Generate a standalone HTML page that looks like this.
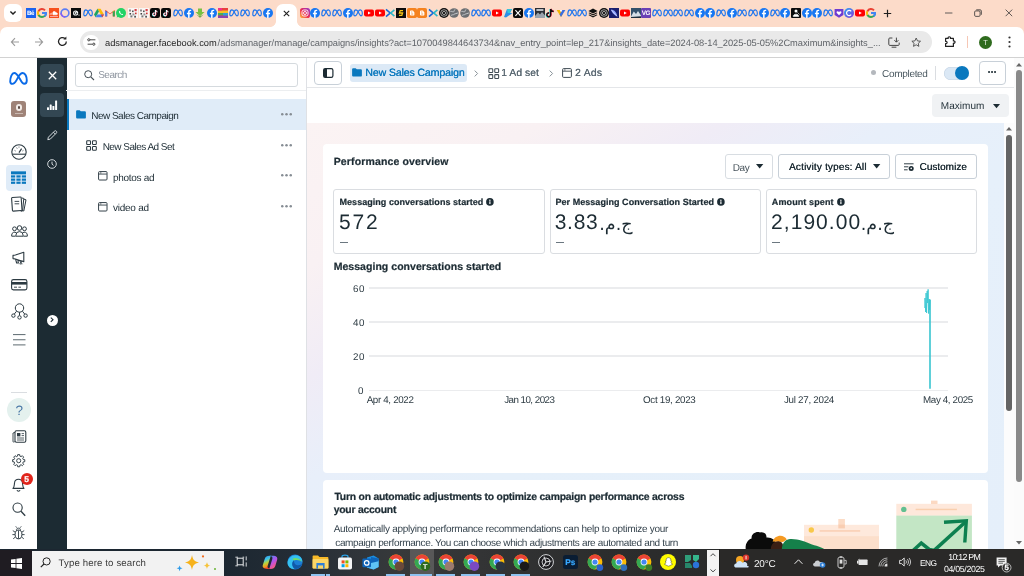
<!DOCTYPE html>
<html lang="en">
<head>
<meta charset="utf-8">
<title>Ads Manager</title>
<style>
*{box-sizing:border-box;margin:0;padding:0}
html,body{width:1024px;height:576px;overflow:hidden;background:#fff}
body{position:relative;font-family:"Liberation Sans","DejaVu Sans",sans-serif;color:#1c2b33;font-size:10px;will-change:transform;text-rendering:geometricPrecision}
.abs{position:absolute}
.t{position:absolute;white-space:nowrap;line-height:1}
svg{position:absolute;overflow:visible}
#tabstrip{left:0;top:0;width:1024px;height:36px;background:#fcdbc9}
#toolbar{left:0;top:27px;width:1024px;height:30px;background:#fff;border-radius:7px 7px 0 0}
#tabdd{left:4px;top:4px;width:18px;height:18px;border-radius:6px;background:#fff}
#acttab{left:276.3px;top:3.8px;width:20.6px;height:24.2px;background:#fff;border-radius:7px 7px 0 0}
#flareL{left:270.3px;top:21px;width:6px;height:6px;background:radial-gradient(circle at 0% 0%,#fcdbc9 5.6px,#fff 6.3px)}
#flareR{left:296.9px;top:21px;width:6px;height:6px;background:radial-gradient(circle at 100% 0%,#fcdbc9 5.6px,#fff 6.3px)}
#urlpill{left:80px;top:31px;width:852px;height:22px;border-radius:11px;background:#e9e9e9}
#siteinfo{left:83.4px;top:34.7px;width:15.4px;height:15.4px;border-radius:50%;background:#fff}
#pagetop{left:0;top:57px;width:1024px;height:1px;background:#d2d2d2}
#rail{left:0;top:58px;width:38px;height:491px;background:#fff}
#dark{left:37px;top:58px;width:30px;height:491px;background:#1c2b33}
.dbtn{left:40px;width:24px;height:23.8px;border-radius:4px;background:#334753}
#tree{left:67px;top:58px;width:240px;height:491px;background:#fff}
#treeborder{left:306px;top:58px;width:1px;height:491.5px;background:#dfe1e5}
#search{left:75px;top:63px;width:223px;height:23.5px;border:1px solid #d5dade;border-radius:3px;background:#fff}
#searchline{left:66px;top:90px;width:240px;height:1px;background:#eceef0}
#selrow{left:67px;top:99px;width:239px;height:31px;background:#e0ecf8;border-left:2px solid #0a78be}
#hdr{left:307px;top:58px;width:707px;height:30px;background:#fff;border-bottom:1px solid #e4e6e9}
#grad{left:307px;top:123px;width:697px;height:426.5px;background:linear-gradient(to bottom right,#fbf3f3 0%,#f9f1f3 17%,#f0ecf6 30%,#e8effa 42%,#e6f0fa 55%,#e5effa 100%)}
#card1{left:322.5px;top:144px;width:665.5px;height:329px;background:#fff;border-radius:4px}
#card2{left:322.5px;top:479.5px;width:665.5px;height:90px;background:#fff;border-radius:4px}
.mbox{top:189px;height:65px;border:1px solid #dadde1;border-radius:3px;background:#fff}
.btn{border:1px solid #c8d0d8;border-radius:3px;background:#fff}
.grid{left:368.5px;width:579.3px;height:1.4px;background:#ebecee}
#sb1{left:1004px;top:123px;width:10px;height:426.5px;background:#fcfcfc}
#sb1t{left:1006px;top:135px;width:5.6px;height:276px;border-radius:3px;background:#646464}
#sb2{left:1013.5px;top:58px;width:10.5px;height:491.5px;background:#fbfbfb}
#sb2t{left:1016.1px;top:70px;width:5.8px;height:412px;border-radius:3px;background:#898989}
#taskbar{left:0;top:549.3px;width:1024px;height:26.7px;background:linear-gradient(90deg,#1c2731 224px,#232c35 290px,#30353a 360px,#37393a 400px,#333435 480px,#2c2d2d 600px,#2a2b2b 707px)}
#start{left:0;top:549.5px;width:32px;height:26.5px;background:#1f1c22}
#tsearch{left:32px;top:550.5px;width:192px;height:25.5px;background:#f2f2f2}
</style>
</head>
<body>
<!-- browser chrome -->
<div id="tabstrip" class="abs"></div>
<div id="toolbar" class="abs"></div>
<div id="tabdd" class="abs"></div>
<div id="acttab" class="abs"></div>
<div id="flareL" class="abs"></div>
<div id="flareR" class="abs"></div>
<div id="urlpill" class="abs"></div>
<div id="siteinfo" class="abs"></div>
<div id="pagetop" class="abs"></div>
<svg width="0" height="0" style="position:absolute"><defs>
<linearGradient id="igg" x1="0" y1="1" x2="1" y2="0"><stop offset="0" stop-color="#fdc13f"/><stop offset="0.45" stop-color="#f0294f"/><stop offset="1" stop-color="#8a3ad6"/></linearGradient>
<linearGradient id="ccg" x1="0" y1="0" x2="1" y2="1"><stop offset="0" stop-color="#2aa7f5"/><stop offset="1" stop-color="#8a3ad6"/></linearGradient>
<symbol id="f-meta" viewBox="0 0 10 10"><path d="M0.8 6.6C0.8 4 1.8 1.9 3 1.9C4.2 1.9 5 3.4 5.8 4.9C6.6 6.5 7.2 7.8 8.1 7.8C9 7.8 9.3 7 9.3 5.8C9.3 3.8 8.5 1.9 7.3 1.9C6.2 1.9 5.5 3 5 4L4 5.9C3.4 7.1 2.8 7.9 2 7.9C1.2 7.9 0.8 7.4 0.8 6.6Z" fill="none" stroke="#1c74ee" stroke-width="1.15" stroke-linejoin="round"/></symbol>
<symbol id="f-fb" viewBox="0 0 10 10"><circle cx="5" cy="5" r="5" fill="#1877f2"/><path d="M5.6 10V6.3H6.9L7.1 4.8H5.6V3.9C5.6 3.4 5.8 3.1 6.4 3.1H7.2V1.8C7 1.8 6.6 1.7 6.1 1.7C4.9 1.7 4.1 2.4 4.1 3.7V4.8H2.9V6.3H4.1V10Z" fill="#fff"/></symbol>
<symbol id="f-yt" viewBox="0 0 10 10"><rect x="0" y="1.6" width="10" height="6.8" rx="1.8" fill="#f00"/><path d="M4 3.4V6.6L6.8 5Z" fill="#fff"/></symbol>
<symbol id="f-g" viewBox="0 0 10 10"><path d="M9 5A4 4 0 0 1 5 9" fill="none" stroke="#34a853" stroke-width="1.9"/><path d="M5 9A4 4 0 0 1 1.3 6.6" fill="none" stroke="#34a853" stroke-width="1.9"/><path d="M1.5 7A4 4 0 0 1 1.5 3" fill="none" stroke="#fbbc05" stroke-width="1.9"/><path d="M1.5 3.2A4 4 0 0 1 8 2.3" fill="none" stroke="#ea4335" stroke-width="1.9"/><path d="M5 5H9.2A4 4 0 0 1 7.6 8.2" fill="none" stroke="#4285f4" stroke-width="1.9"/></symbol>
<symbol id="f-be" viewBox="0 0 10 10"><rect width="10" height="10" fill="#1a63f0"/><text x="0.9" y="7.3" font-family="Liberation Sans,sans-serif" font-size="6.2" font-weight="bold" fill="#fff" letter-spacing="-0.3">Bē</text></symbol>
<symbol id="f-sc" viewBox="0 0 10 10"><rect width="10" height="10" fill="#f7501c"/><path d="M1 6.8V5.6M2 6.8V5M3 6.8V4.6M4 6.8V4C5.2 3 6.8 3.6 7 4.9C8.8 4.6 9 6.8 7.6 6.8Z" fill="#fff" stroke="#fff" stroke-width="0.6"/><rect x="1" y="8" width="8" height="0.8" fill="#fbb"/></symbol>
<symbol id="f-ring" viewBox="0 0 10 10"><circle cx="5" cy="5" r="3.9" fill="none" stroke="#5b7cf5" stroke-width="1.6"/><path d="M1.1 5A3.9 3.9 0 0 0 5 8.9" fill="none" stroke="#8a5cf0" stroke-width="1.6"/></symbol>
<symbol id="f-blackg" viewBox="0 0 10 10"><rect width="10" height="10" fill="#0b0b0b"/><circle cx="4.6" cy="5" r="2.6" fill="#fff"/><path d="M4.6 3.6A1.4 1.4 0 1 0 6 5H4.8" fill="none" stroke="#111" stroke-width="0.7"/><circle cx="8" cy="7" r="0.6" fill="#fff"/></symbol>
<symbol id="f-drive" viewBox="0 0 10 10"><path d="M3.4 0.8H6.6L10 6.6H6.8Z" fill="#fbbc05"/><path d="M3.4 0.8L0 6.6L1.6 9.3L5 3.5Z" fill="#1fa463"/><path d="M1.6 9.3H8.4L10 6.6H3.2Z" fill="#4285f4"/><path d="M6.8 6.6H10L8.4 9.3Z" fill="#ea4335"/></symbol>
<symbol id="f-gmail" viewBox="0 0 10 10"><path d="M0.2 2V8.4H2.2V4.2L5 6.3L7.8 4.2V8.4H9.8V2L5 5.4Z" fill="#ea4335"/><rect x="0.2" y="3" width="2" height="5.4" fill="#4285f4"/><rect x="7.8" y="3" width="2" height="5.4" fill="#34a853"/><path d="M0.2 2L2.2 4.2V3.2Z" fill="#c5221f"/><path d="M9.8 2L7.8 4.2V3.2Z" fill="#fbbc05"/></symbol>
<symbol id="f-wa" viewBox="0 0 10 10"><circle cx="5" cy="5" r="5" fill="#25d366"/><path d="M0.6 9.6L1.4 7.2L3 8.8Z" fill="#25d366"/><path d="M3.3 2.8C2.6 3.6 3.1 5 4.2 6C5.3 7 6.5 7.4 7.2 6.7L6.4 5.8L5.8 6.2C5.2 6 4.4 5.2 4.2 4.6L4.6 4Z" fill="#fff"/></symbol>
<symbol id="f-pix" viewBox="0 0 10 10"><rect width="10" height="10" fill="#faf6f4"/><rect x="1" y="1.5" width="2" height="2" fill="#8a8a8a"/><rect x="4" y="2.5" width="1.6" height="1.6" fill="#555"/><rect x="6.5" y="1" width="2.2" height="2.2" fill="#d8424a"/><rect x="1.5" y="5" width="1.6" height="1.6" fill="#444"/><rect x="4.4" y="5.4" width="2" height="2" fill="#999"/><rect x="7" y="4.6" width="1.6" height="1.6" fill="#c33"/><rect x="2.4" y="7.4" width="2" height="2" fill="#777"/><rect x="6.2" y="7.8" width="1.8" height="1.8" fill="#555"/></symbol>
<symbol id="f-tt" viewBox="0 0 10 10"><rect width="10" height="10" rx="2.2" fill="#0a0a0a"/><path d="M5.6 2V6.4A1.4 1.4 0 1 1 4.4 5" fill="none" stroke="#25f4ee" stroke-width="1.1" transform="translate(-0.3 0.2)"/><path d="M5.6 2V6.4A1.4 1.4 0 1 1 4.4 5" fill="none" stroke="#fe2c55" stroke-width="1.1" transform="translate(0.3 -0.1)"/><path d="M5.6 2V6.4A1.4 1.4 0 1 1 4.4 5M5.6 2C5.8 3.2 6.6 3.8 7.6 3.9" fill="none" stroke="#fff" stroke-width="1"/></symbol>
<symbol id="f-ttn" viewBox="0 0 10 10"><path d="M5.6 1V6.8A1.9 1.9 0 1 1 4 5" fill="none" stroke="#25f4ee" stroke-width="1.5" transform="translate(-0.5 0.3)"/><path d="M5.6 1V6.8A1.9 1.9 0 1 1 4 5M5.6 1C5.9 2.6 7 3.4 8.6 3.5" fill="none" stroke="#fe2c55" stroke-width="1.5" transform="translate(0.4 -0.1)"/><path d="M5.6 1V6.8A1.9 1.9 0 1 1 4 5M5.6 1C5.9 2.6 7 3.4 8.6 3.5" fill="none" stroke="#111" stroke-width="1.4"/></symbol>
<symbol id="f-garrow" viewBox="0 0 10 10"><path d="M3 0.5H7V4H9.6L5 8.2L0.4 4H3Z" fill="#7ac142"/><path d="M1.4 6.6L5 9.8L8.6 6.6L5 8.4Z" fill="#4e9a2a"/></symbol>
<symbol id="f-csq" viewBox="0 0 10 10"><rect width="10" height="10" fill="#e8413c"/><rect y="2.5" width="10" height="2.5" fill="#f6c026"/><rect y="5" width="10" height="2.5" fill="#4caf50"/><rect y="7.5" width="10" height="2.5" fill="#8e44ad"/><rect x="5" y="5" width="5" height="2.5" fill="#2d9cdb"/><rect x="0" y="0" width="4" height="2.5" fill="#f0308a"/></symbol>
<symbol id="f-ig" viewBox="0 0 10 10"><rect width="10" height="10" rx="2.6" fill="url(#igg)"/><rect x="2" y="2" width="6" height="6" rx="1.8" fill="none" stroke="#fff" stroke-width="0.9"/><circle cx="5" cy="5" r="1.5" fill="none" stroke="#fff" stroke-width="0.9"/></symbol>
<symbol id="f-xchev" viewBox="0 0 10 10"><path d="M1 1.4L5.2 5L1 8.6" fill="none" stroke="#1565d8" stroke-width="1.6"/><path d="M9.4 1.8L5.8 5L9.4 8.2" fill="none" stroke="#2bb7c9" stroke-width="1.6"/></symbol>
<symbol id="f-bs" viewBox="0 0 10 10"><rect width="10" height="10" fill="#0c0c0c"/><path d="M7 2.6H4.2L3.4 5H6.6L5.8 7.4H3" fill="none" stroke="#f5c518" stroke-width="1.3"/></symbol>
<symbol id="f-blog" viewBox="0 0 10 10"><rect width="10" height="10" rx="1.8" fill="#f5821f"/><path d="M3 3.2C3 2.6 3.4 2.4 3.9 2.4H5.4C6.4 2.4 6.8 3.2 6.8 4C7.4 4 7.4 4.6 7.4 5V6.4C7.4 7.2 6.9 7.6 6.2 7.6H3.9C3.4 7.6 3 7.2 3 6.8Z" fill="#fff"/><path d="M4.2 4H5.4M4.2 6H6.2" stroke="#f5821f" stroke-width="0.8"/></symbol>
<symbol id="f-thr" viewBox="0 0 10 10"><circle cx="5" cy="5" r="5" fill="#101010"/><circle cx="5" cy="5" r="3.3" fill="none" stroke="#ddd" stroke-width="0.7"/><circle cx="5" cy="5" r="1.6" fill="none" stroke="#ddd" stroke-width="0.7"/></symbol>
<symbol id="f-globe" viewBox="0 0 10 10"><circle cx="5" cy="5" r="4.8" fill="#6b6e72"/><path d="M1.5 3.5C3 3 3.6 4.2 4.6 3.8C5.4 3.4 5 2 6 1.4M2 7.6C3 6.4 4.4 7.2 5.2 6.2C6 5.4 7.4 5.8 8.8 5" fill="none" stroke="#c9cbcf" stroke-width="1"/></symbol>
<symbol id="f-x" viewBox="0 0 10 10"><rect width="10" height="10" rx="2" fill="#0b0b0b"/><path d="M2.4 2.2L7.6 7.8M7.6 2.2L2.4 7.8" stroke="#fff" stroke-width="1.1"/></symbol>
<symbol id="f-photo" viewBox="0 0 10 10"><rect width="10" height="10" fill="#2b2f36"/><path d="M0 8L3 4.6L5 6.6L7 4L10 7.4V10H0Z" fill="#9aa3ad"/><rect x="1.4" y="1.2" width="7" height="1.6" fill="#dfe3e8"/></symbol>
<symbol id="f-vsh" viewBox="0 0 10 10"><path d="M0.6 2L5 9L6.6 6.4L3.8 2Z" fill="#f4b400"/><path d="M9.4 2L5 9L3.6 6.6L6.4 2Z" fill="#3b6fe0"/><path d="M3.8 2L5 4L6.2 2Z" fill="#fff"/></symbol>
<symbol id="f-layers" viewBox="0 0 10 10"><path d="M5 0.6L9.6 3L5 5.4L0.4 3Z" fill="#111"/><path d="M0.4 5L5 7.4L9.6 5L8.4 4.4L5 6.2L1.6 4.4Z" fill="#111"/><path d="M0.4 7L5 9.4L9.6 7L8.4 6.4L5 8.2L1.6 6.4Z" fill="#111"/></symbol>
<symbol id="f-feather" viewBox="0 0 10 10"><rect width="10" height="10" fill="#1b1f6e"/><path d="M2 1.6C5.6 2 7.8 4.6 8.2 8.6C6 7.4 3 5.6 2 1.6Z" fill="#8ea2ff"/><path d="M2.4 2L8 8.4" stroke="#fff" stroke-width="0.5"/></symbol>
<symbol id="f-mount" viewBox="0 0 10 10"><rect width="10" height="10" fill="#33506b"/><path d="M0 8.4L2.8 3.4L5 6L7 3L10 7.6V10H0Z" fill="#d5dde6"/><path d="M0 9L10 8.2V10H0Z" fill="#1d2d3c"/></symbol>
<symbol id="f-vg" viewBox="0 0 10 10"><rect width="10" height="10" rx="1" fill="#6a3fb5"/><text x="0.7" y="7.4" font-family="Liberation Sans,sans-serif" font-size="6.4" font-weight="bold" fill="#fff" letter-spacing="-0.4">VG</text></symbol>
<symbol id="f-fig" viewBox="0 0 10 10"><rect width="10" height="10" rx="1" fill="#0b0b0b"/><circle cx="5" cy="3" r="1.5" fill="#fff"/><path d="M2.2 8.4C2.2 5.4 7.8 5.4 7.8 8.4ZM6.4 4.4L8.6 6.6" fill="#fff" stroke="#fff" stroke-width="0.6"/></symbol>
<symbol id="f-heart" viewBox="0 0 10 10"><path d="M0.6 1H9.4V7L5 9.8L0.6 7Z" fill="#6f3bd1"/><path d="M5 7.2L2.8 5C1.8 3.8 3.6 2.4 5 4C6.4 2.4 8.2 3.8 7.2 5Z" fill="#fff"/></symbol>
<symbol id="f-cc" viewBox="0 0 10 10"><circle cx="5" cy="5" r="5" fill="url(#ccg)"/><path d="M7.2 3.4A2.6 2.6 0 1 0 7.2 6.6" fill="none" stroke="#fff" stroke-width="1.2"/></symbol>
<symbol id="f-teal" viewBox="0 0 10 10"><path d="M1 9L4 1H9L7 5H9.6L3 9.6Z" fill="#2b8fe8"/><path d="M4 1H9L7 5H4.6Z" fill="#38c4d8"/></symbol>
</defs></svg>
<svg style="left:26.20px;top:8.1px" width="10" height="10"><use href="#f-be"/></svg>
<svg style="left:37.47px;top:8.1px" width="10" height="10"><use href="#f-g"/></svg>
<svg style="left:48.74px;top:8.1px" width="10" height="10"><use href="#f-sc"/></svg>
<svg style="left:60.01px;top:8.1px" width="10" height="10"><use href="#f-ring"/></svg>
<svg style="left:71.28px;top:8.1px" width="10" height="10"><use href="#f-blackg"/></svg>
<svg style="left:82.55px;top:8.1px" width="10" height="10"><use href="#f-meta"/></svg>
<svg style="left:93.82px;top:8.1px" width="10" height="10"><use href="#f-drive"/></svg>
<svg style="left:105.09px;top:8.1px" width="10" height="10"><use href="#f-gmail"/></svg>
<svg style="left:116.36px;top:8.1px" width="10" height="10"><use href="#f-wa"/></svg>
<svg style="left:127.63px;top:8.1px" width="10" height="10"><use href="#f-pix"/></svg>
<svg style="left:138.90px;top:8.1px" width="10" height="10"><use href="#f-pix"/></svg>
<svg style="left:150.17px;top:8.1px" width="10" height="10"><use href="#f-tt"/></svg>
<svg style="left:161.44px;top:8.1px" width="10" height="10"><use href="#f-tt"/></svg>
<svg style="left:172.71px;top:8.1px" width="10" height="10"><use href="#f-meta"/></svg>
<svg style="left:183.98px;top:8.1px" width="10" height="10"><use href="#f-fb"/></svg>
<svg style="left:195.25px;top:8.1px" width="10" height="10"><use href="#f-garrow"/></svg>
<svg style="left:206.52px;top:8.1px" width="10" height="10"><use href="#f-fb"/></svg>
<svg style="left:217.79px;top:8.1px" width="10" height="10"><use href="#f-csq"/></svg>
<svg style="left:229.06px;top:8.1px" width="10" height="10"><use href="#f-meta"/></svg>
<svg style="left:240.33px;top:8.1px" width="10" height="10"><use href="#f-meta"/></svg>
<svg style="left:251.60px;top:8.1px" width="10" height="10"><use href="#f-meta"/></svg>
<svg style="left:262.87px;top:8.1px" width="10" height="10"><use href="#f-fb"/></svg>
<svg style="left:299.80px;top:8.1px" width="10" height="10"><use href="#f-ig"/></svg>
<svg style="left:310.48px;top:8.1px" width="10" height="10"><use href="#f-fb"/></svg>
<svg style="left:321.15px;top:8.1px" width="10" height="10"><use href="#f-meta"/></svg>
<svg style="left:331.83px;top:8.1px" width="10" height="10"><use href="#f-meta"/></svg>
<svg style="left:342.50px;top:8.1px" width="10" height="10"><use href="#f-fb"/></svg>
<svg style="left:353.18px;top:8.1px" width="10" height="10"><use href="#f-meta"/></svg>
<svg style="left:363.85px;top:8.1px" width="10" height="10"><use href="#f-yt"/></svg>
<svg style="left:374.53px;top:8.1px" width="10" height="10"><use href="#f-yt"/></svg>
<svg style="left:385.20px;top:8.1px" width="10" height="10"><use href="#f-xchev"/></svg>
<svg style="left:395.88px;top:8.1px" width="10" height="10"><use href="#f-bs"/></svg>
<svg style="left:406.55px;top:8.1px" width="10" height="10"><use href="#f-blog"/></svg>
<svg style="left:417.23px;top:8.1px" width="10" height="10"><use href="#f-blog"/></svg>
<svg style="left:427.91px;top:8.1px" width="10" height="10"><use href="#f-xchev"/></svg>
<svg style="left:438.58px;top:8.1px" width="10" height="10"><use href="#f-thr"/></svg>
<svg style="left:449.26px;top:8.1px" width="10" height="10"><use href="#f-globe"/></svg>
<svg style="left:459.93px;top:8.1px" width="10" height="10"><use href="#f-globe"/></svg>
<svg style="left:470.61px;top:8.1px" width="10" height="10"><use href="#f-meta"/></svg>
<svg style="left:481.28px;top:8.1px" width="10" height="10"><use href="#f-meta"/></svg>
<svg style="left:491.96px;top:8.1px" width="10" height="10"><use href="#f-yt"/></svg>
<svg style="left:502.63px;top:8.1px" width="10" height="10"><use href="#f-teal"/></svg>
<svg style="left:513.31px;top:8.1px" width="10" height="10"><use href="#f-x"/></svg>
<svg style="left:523.98px;top:8.1px" width="10" height="10"><use href="#f-fb"/></svg>
<svg style="left:534.66px;top:8.1px" width="10" height="10"><use href="#f-photo"/></svg>
<svg style="left:545.34px;top:8.1px" width="10" height="10"><use href="#f-ttn"/></svg>
<svg style="left:556.01px;top:8.1px" width="10" height="10"><use href="#f-vsh"/></svg>
<svg style="left:566.69px;top:8.1px" width="10" height="10"><use href="#f-meta"/></svg>
<svg style="left:577.36px;top:8.1px" width="10" height="10"><use href="#f-meta"/></svg>
<svg style="left:588.04px;top:8.1px" width="10" height="10"><use href="#f-layers"/></svg>
<svg style="left:598.71px;top:8.1px" width="10" height="10"><use href="#f-thr"/></svg>
<svg style="left:609.39px;top:8.1px" width="10" height="10"><use href="#f-feather"/></svg>
<svg style="left:620.06px;top:8.1px" width="10" height="10"><use href="#f-yt"/></svg>
<svg style="left:630.74px;top:8.1px" width="10" height="10"><use href="#f-mount"/></svg>
<svg style="left:641.42px;top:8.1px" width="10" height="10"><use href="#f-vg"/></svg>
<svg style="left:652.09px;top:8.1px" width="10" height="10"><use href="#f-meta"/></svg>
<svg style="left:662.77px;top:8.1px" width="10" height="10"><use href="#f-meta"/></svg>
<svg style="left:673.44px;top:8.1px" width="10" height="10"><use href="#f-meta"/></svg>
<svg style="left:684.12px;top:8.1px" width="10" height="10"><use href="#f-meta"/></svg>
<svg style="left:694.79px;top:8.1px" width="10" height="10"><use href="#f-fb"/></svg>
<svg style="left:705.47px;top:8.1px" width="10" height="10"><use href="#f-fb"/></svg>
<svg style="left:716.14px;top:8.1px" width="10" height="10"><use href="#f-meta"/></svg>
<svg style="left:726.82px;top:8.1px" width="10" height="10"><use href="#f-fb"/></svg>
<svg style="left:737.49px;top:8.1px" width="10" height="10"><use href="#f-meta"/></svg>
<svg style="left:748.17px;top:8.1px" width="10" height="10"><use href="#f-meta"/></svg>
<svg style="left:758.85px;top:8.1px" width="10" height="10"><use href="#f-fb"/></svg>
<svg style="left:769.52px;top:8.1px" width="10" height="10"><use href="#f-meta"/></svg>
<svg style="left:780.20px;top:8.1px" width="10" height="10"><use href="#f-fb"/></svg>
<svg style="left:790.87px;top:8.1px" width="10" height="10"><use href="#f-fig"/></svg>
<svg style="left:801.55px;top:8.1px" width="10" height="10"><use href="#f-fb"/></svg>
<svg style="left:812.22px;top:8.1px" width="10" height="10"><use href="#f-fb"/></svg>
<svg style="left:822.90px;top:8.1px" width="10" height="10"><use href="#f-meta"/></svg>
<svg style="left:833.57px;top:8.1px" width="10" height="10"><use href="#f-heart"/></svg>
<svg style="left:844.25px;top:8.1px" width="10" height="10"><use href="#f-cc"/></svg>
<svg style="left:854.92px;top:8.1px" width="10" height="10"><use href="#f-yt"/></svg>
<svg style="left:865.60px;top:8.1px" width="10" height="10"><use href="#f-g"/></svg>
<svg style="left:9px;top:10px" width="8" height="6" viewBox="0 0 8 6"><path d="M1.4 1.4L4 4L6.6 1.4" fill="none" stroke="#1f1f1f" stroke-width="1.4"/></svg>
<svg style="left:283px;top:10px" width="7" height="7" viewBox="0 0 7 7"><path d="M0.8 0.8L6.2 6.2M6.2 0.8L0.8 6.2" stroke="#1f1f1f" stroke-width="1.1"/></svg>
<svg style="left:883px;top:9px" width="9" height="9" viewBox="0 0 9 9"><path d="M4.5 0.8V8.2M0.8 4.5H8.2" stroke="#1f1f1f" stroke-width="1.2"/></svg>
<svg style="left:944.5px;top:12.3px" width="7.4" height="2" viewBox="0 0 7.4 2"><path d="M0 1H7.4" stroke="#444" stroke-width="0.85"/></svg>
<svg style="left:974.4px;top:8.6px" width="8" height="8" viewBox="0 0 10 10"><rect x="0.8" y="2.4" width="6.8" height="6.8" rx="1.4" fill="none" stroke="#333" stroke-width="1"/><path d="M2.8 1H7.6C8.6 1 9.2 1.6 9.2 2.6V7.2" fill="none" stroke="#333" stroke-width="1"/></svg>
<svg style="left:1004.8px;top:9px" width="7.8" height="7.8" viewBox="0 0 10 10"><path d="M0.8 0.8L9.2 9.2M9.2 0.8L0.8 9.2" stroke="#333" stroke-width="1"/></svg>
<svg style="left:10px;top:37px" width="10" height="10" viewBox="0 0 10 10"><path d="M9 5H1.6M5 1.2L1.4 5L5 8.8" fill="none" stroke="#9b9b9b" stroke-width="1.1"/></svg>
<svg style="left:34px;top:37px" width="10" height="10" viewBox="0 0 10 10"><path d="M1 5H8.4M5 1.2L8.6 5L5 8.8" fill="none" stroke="#9b9b9b" stroke-width="1.1"/></svg>
<svg style="left:57px;top:36px" width="11" height="11" viewBox="0 0 11 11"><path d="M9.3 5.5A3.9 3.9 0 1 1 8 2.6" fill="none" stroke="#222" stroke-width="1.3"/><path d="M6.4 3.4H9.4V0.6Z" fill="#222"/></svg>
<svg style="left:87px;top:38px" width="9" height="8" viewBox="0 0 9 8"><path d="M3 1.8H8.4M0.6 6.2H5.4" stroke="#333" stroke-width="0.9"/><circle cx="1.8" cy="1.8" r="1.1" fill="none" stroke="#333" stroke-width="0.9"/><circle cx="6.8" cy="6.2" r="1.1" fill="none" stroke="#333" stroke-width="0.9"/></svg>
<div class="t" style="left:105.00px;top:39.00px;font-size:9.30px;color:#1f1f1f;letter-spacing:0.006px;">adsmanager.facebook.com</div>
<div class="t" style="left:217.60px;top:39.00px;font-size:9.30px;color:#5f6368;letter-spacing:-0.025px;">/adsmanager/manage/campaigns/insights?act=1070049844643734&amp;nav_entry_point=lep_217&amp;insights_date=2024-08-14_2025-05-05%2Cmaximum&amp;insights_...</div>
<svg style="left:888px;top:37px" width="12" height="11" viewBox="0 0 12 11"><path d="M4.4 1H1.8C1.2 1 0.8 1.4 0.8 2V7.4C0.8 8 1.2 8.4 1.8 8.4H10.2C10.8 8.4 11.2 8 11.2 7.4V5.6M3.6 10.2H8.4" fill="none" stroke="#444" stroke-width="1"/><path d="M8.4 0.6V5M6.4 3.2L8.4 5.2L10.4 3.2" fill="none" stroke="#444" stroke-width="1"/></svg>
<svg style="left:911px;top:36.8px" width="10.4" height="10.4" viewBox="0 0 12 12"><path d="M6 1.2L7.5 4.5L11 4.9L8.4 7.3L9.1 10.8L6 9L2.9 10.8L3.6 7.3L1 4.9L4.5 4.5Z" fill="none" stroke="#444" stroke-width="1" stroke-linejoin="round"/></svg>
<svg style="left:944px;top:35px" width="13" height="13" viewBox="0 0 13 13"><path d="M1.6 3.4H4.2C3.6 1.2 7 1.2 6.4 3.4H9.4V6C11.6 5.4 11.6 8.8 9.4 8.2V11.4H1.6V8.6C3.6 9 3.6 6 1.6 6.4Z" fill="none" stroke="#222" stroke-width="1.2" stroke-linejoin="round"/></svg>
<div class="abs" style="left:967px;top:36px;width:1px;height:12px;background:#f6c7b5"></div>
<div class="abs" style="left:979px;top:35.5px;width:13px;height:13px;border-radius:50%;background:#2f6b1e"></div>
<div class="t" style="left:983.20px;top:39.00px;font-size:7.40px;color:#e8f0e4;">T</div>
<svg style="left:1008px;top:36px" width="3" height="12" viewBox="0 0 3 12"><circle cx="1.5" cy="1.5" r="1.1" fill="#333"/><circle cx="1.5" cy="6" r="1.1" fill="#333"/><circle cx="1.5" cy="10.5" r="1.1" fill="#333"/></svg>
<!-- page -->
<div id="rail" class="abs"></div>
<div id="dark" class="abs"></div>
<div class="abs dbtn" style="top:63.5px"></div><div class="abs dbtn" style="top:93px"></div>
<div id="tree" class="abs"></div>
<div id="treeborder" class="abs"></div>
<div id="search" class="abs"></div>
<div id="searchline" class="abs"></div>
<div id="selrow" class="abs"></div>
<div id="hdr" class="abs"></div>
<div id="grad" class="abs"></div>
<div id="card1" class="abs"></div>
<div id="card2" class="abs"></div>
<div id="sb1" class="abs"></div>
<div id="sb1t" class="abs"></div>
<div id="sb2" class="abs"></div>
<div id="sb2t" class="abs"></div>
<svg style="left:1006px;top:126.5px" width="6" height="3.6" viewBox="0 0 6 3.6"><path d="M0 3.6L3 0L6 3.6Z" fill="#666"/></svg>
<svg style="left:1016px;top:63px" width="6" height="3.6" viewBox="0 0 6 3.6"><path d="M0 3.6L3 0L6 3.6Z" fill="#666"/></svg>
<svg style="left:1016px;top:541px" width="6" height="3.6" viewBox="0 0 6 3.6"><path d="M0 0L3 3.6L6 0Z" fill="#666"/></svg>
<svg style="left:9.40px;top:71.60px" width="19.00" height="13.00" viewBox="0 0 19 13"><path d="M1.2 9.6C1.2 5 3 1 5.2 1C7.4 1 9 3.6 10.6 6.4C12.2 9.4 13.4 11.8 15.2 11.8C17 11.8 17.8 10.4 17.8 8.2C17.8 4.6 16.2 1 13.8 1C11.8 1 10.4 3 9.4 4.8L7.4 8.4C6.2 10.6 5 11.9 3.4 11.9C2 11.9 1.2 11 1.2 9.6Z" fill="none" stroke="#0a6ae8" stroke-width="1.9" stroke-linejoin="round"/></svg>
<div class="abs" style="left:10.5px;top:101px;width:15.5px;height:15.5px;border-radius:3px;background:#9f8378"></div>
<div class="abs" style="left:15.5px;top:104px;width:6px;height:7px;border-radius:3px;background:#f3ece8"></div>
<div class="abs" style="left:17.5px;top:106px;width:2.4px;height:3px;border-radius:1px;background:#5b4a44"></div>
<div class="abs" style="left:14.5px;top:112.6px;width:8px;height:1px;background:#c9b8b0"></div>
<svg style="left:11.00px;top:143.50px" width="16.00" height="16.00" viewBox="0 0 16 16"><circle cx="8" cy="8" r="7.2" fill="none" stroke="#2c3a42" stroke-width="1.1"/><path d="M1.4 10.2H14.6" stroke="#2c3a42" stroke-width="1.1"/><path d="M8 8.6L10.6 4.6" stroke="#2c3a42" stroke-width="1.2"/><path d="M3.6 6.4L4.6 7M5.6 3.6L6.2 4.6M8 2.6V3.6M12.4 6.4L11.4 7" stroke="#2c3a42" stroke-width="0.8"/></svg>
<div class="abs" style="left:5.5px;top:165px;width:26.5px;height:26px;border-radius:4px;background:#e0ecf8"></div>
<svg style="left:11.20px;top:171.20px" width="15.00" height="13.20" viewBox="0 0 15 12.5"><rect x="0" y="0" width="15" height="3" fill="#0a78be"/><g fill="#0a78be"><rect x="0" y="4" width="4.2" height="2.2"/><rect x="5.4" y="4" width="4.2" height="2.2"/><rect x="10.8" y="4" width="4.2" height="2.2"/><rect x="0" y="7.2" width="4.2" height="2.2"/><rect x="5.4" y="7.2" width="4.2" height="2.2"/><rect x="10.8" y="7.2" width="4.2" height="2.2"/><rect x="0" y="10.3" width="4.2" height="2.2"/><rect x="5.4" y="10.3" width="4.2" height="2.2"/><rect x="10.8" y="10.3" width="4.2" height="2.2"/></g></svg>
<svg style="left:10.00px;top:196.00px" width="17.00" height="17.00" viewBox="0 0 17 17"><g transform="translate(17 0) scale(-1 1)"><path d="M3 3.2L1 3.8L3.2 15L5 14.6M5.2 2L3.2 2.4L4.4 14.8L6.2 15.4" fill="none" stroke="#2c3a42" stroke-width="1"/><rect x="5.4" y="1.2" width="9.6" height="13.6" rx="0.8" fill="#fff" stroke="#2c3a42" stroke-width="1.1" transform="rotate(4 10 8)"/></g><path d="M4.6 5.4H9.2M4.6 7.8H9.2" stroke="#2c3a42" stroke-width="0.9"/></svg>
<svg style="left:10.50px;top:224.50px" width="17.00" height="12.00" viewBox="0 0 17 12"><circle cx="8.5" cy="3" r="2.3" fill="none" stroke="#2c3a42" stroke-width="1"/><circle cx="3.5" cy="3.8" r="1.9" fill="none" stroke="#2c3a42" stroke-width="1"/><circle cx="13.5" cy="3.8" r="1.9" fill="none" stroke="#2c3a42" stroke-width="1"/><path d="M4.9 11.2V10.2A3.6 3.6 0 0 1 12.1 10.2V11.2ZM4.6 11.2H0.7V10A2.8 2.8 0 0 1 5.4 7.9M12.4 11.2H16.3V10A2.8 2.8 0 0 0 11.6 7.9" fill="none" stroke="#2c3a42" stroke-width="1" stroke-linejoin="round"/></svg>
<svg style="left:11.50px;top:251.00px" width="15.00" height="14.00" viewBox="0 0 15 14"><path d="M1 4.4V7.6L3.4 8L11.8 10.8V1.2L3.4 4ZM3.6 8.2L4.6 12H6.4L5.8 8.8" fill="none" stroke="#2c3a42" stroke-width="1.1" stroke-linejoin="round"/><path d="M7.4 9.6L10.4 13.2M10.4 9.6L7.4 13.2M8.9 9V13.8" stroke="#2c3a42" stroke-width="0.8"/></svg>
<svg style="left:10.50px;top:279.00px" width="16.50" height="11.50" viewBox="0 0 16.5 11.5"><rect x="0.6" y="0.6" width="15.3" height="10.3" rx="1.8" fill="none" stroke="#2c3a42" stroke-width="1.1"/><rect x="0.6" y="3" width="15.3" height="2.6" fill="#2c3a42"/><path d="M3 8.2H6M7.4 8.2H10" stroke="#2c3a42" stroke-width="0.9"/></svg>
<svg style="left:10.50px;top:303.00px" width="17.00" height="17.00" viewBox="0 0 17 17"><circle cx="8.5" cy="5" r="4.2" fill="none" stroke="#2c3a42" stroke-width="1"/><path d="M8.5 9.2V12.4M5.6 8.2L3.2 11.2M11.4 8.2L13.8 11.2" stroke="#2c3a42" stroke-width="1"/><circle cx="2.4" cy="12.6" r="1.7" fill="none" stroke="#2c3a42" stroke-width="1"/><circle cx="8.5" cy="14.4" r="1.7" fill="none" stroke="#2c3a42" stroke-width="1"/><circle cx="14.6" cy="12.6" r="1.7" fill="none" stroke="#2c3a42" stroke-width="1"/></svg>
<svg style="left:12.50px;top:334.00px" width="12.50" height="11.50" viewBox="0 0 12.5 11.5"><path d="M0 0.6H12.5M0 5.75H12.5M0 10.9H12.5" stroke="#4a5860" stroke-width="0.9"/></svg>
<div class="abs" style="left:11px;top:392px;width:16px;height:1px;background:#dadde1"></div>
<div class="abs" style="left:6.5px;top:398px;width:24px;height:24px;border-radius:50%;background:#e4f1ee"></div>
<div class="t" style="left:15.40px;top:404.00px;font-size:13.50px;color:#4a78a6;">?</div>
<svg style="left:11.50px;top:429.50px" width="14.50" height="13.00" viewBox="0 0 14.5 13"><path d="M3 2.4L1 3V11.4C1 12.4 2.6 12.4 2.8 11.4" fill="none" stroke="#2c3a42" stroke-width="0.9"/><rect x="3" y="0.8" width="10.8" height="11.4" rx="1.4" fill="none" stroke="#2c3a42" stroke-width="1.1"/><rect x="5" y="3" width="3.4" height="3.4" fill="#2c3a42"/><path d="M9.6 3.6H12M9.6 5.6H12M5 8H12M5 10H12" stroke="#2c3a42" stroke-width="0.8"/></svg>
<svg style="left:12.00px;top:454.20px" width="13.40" height="13.40" viewBox="0 0 15 15"><path d="M12.64 6.22L14.31 6.37L14.31 8.63L12.64 8.78L12.04 10.23L13.11 11.51L11.51 13.11L10.23 12.04L8.78 12.64L8.63 14.31L6.37 14.31L6.22 12.64L4.77 12.04L3.49 13.11L1.89 11.51L2.96 10.23L2.36 8.78L0.69 8.63L0.69 6.37L2.36 6.22L2.96 4.77L1.89 3.49L3.49 1.89L4.77 2.96L6.22 2.36L6.37 0.69L8.63 0.69L8.78 2.36L10.23 2.96L11.51 1.89L13.11 3.49L12.04 4.77Z" fill="none" stroke="#2c3a42" stroke-width="1.05" stroke-linejoin="round"/><circle cx="7.5" cy="7.5" r="2.3" fill="none" stroke="#2c3a42" stroke-width="1.05"/></svg>
<svg style="left:12.00px;top:477.00px" width="13.00" height="15.00" viewBox="0 0 13 15"><path d="M1 11.4C2.6 9.6 2.2 7.6 2.6 5.4C3.2 1.2 9.8 1.2 10.4 5.4C10.8 7.6 10.4 9.6 12 11.4ZM5 13.2C5.4 14.6 7.6 14.6 8 13.2" fill="none" stroke="#2c3a42" stroke-width="1.1" stroke-linejoin="round"/></svg>
<div class="abs" style="left:20.5px;top:473px;width:12px;height:12px;border-radius:50%;background:#e0241b"></div>
<div class="t" style="left:24.30px;top:475.00px;font-size:8.50px;color:#fff;font-weight:bold;-webkit-text-stroke:0.22px;">5</div>
<svg style="left:11.50px;top:501.50px" width="14.00" height="14.50" viewBox="0 0 14 14.5"><circle cx="5.6" cy="5.6" r="4.6" fill="none" stroke="#2c3a42" stroke-width="1.1"/><path d="M9 9.2L13.2 13.8" stroke="#2c3a42" stroke-width="1.3"/></svg>
<svg style="left:12.00px;top:525.50px" width="13.00" height="14.00" viewBox="0 0 13 14"><ellipse cx="6.5" cy="8.4" rx="3.4" ry="4.4" fill="none" stroke="#2c3a42" stroke-width="1"/><path d="M6.5 4.4V12.6M4.4 3.8C4.4 1.6 8.6 1.6 8.6 3.8M3.2 6.2L0.8 4.6M9.8 6.2L12.2 4.6M3 8.6H0.4M10 8.6H12.6M3.4 11L1.2 12.8M9.6 11L11.8 12.8M4.6 1.6L3.8 0.4M8.4 1.6L9.2 0.4" fill="none" stroke="#2c3a42" stroke-width="0.9"/></svg>
<svg style="left:47.50px;top:71.00px" width="9.00" height="9.00" viewBox="0 0 9 9"><path d="M0.8 0.8L8.2 8.2M8.2 0.8L0.8 8.2" stroke="#fff" stroke-width="1.3"/></svg>
<svg style="left:47.00px;top:99.50px" width="10.00" height="10.00" viewBox="0 0 10 10"><rect x="0" y="7.2" width="2" height="2.8" rx="0.5" fill="#fff"/><rect x="2.7" y="4.6" width="2" height="5.4" rx="0.5" fill="#fff"/><rect x="5.4" y="6" width="2" height="4" rx="0.5" fill="#fff"/><rect x="8.1" y="0.6" width="2" height="9.4" rx="0.5" fill="#fff"/></svg>
<svg style="left:47.00px;top:129.50px" width="10.50" height="10.50" viewBox="0 0 10.5 10.5"><path d="M0.8 9.7L1.4 7.2L7.4 1.2C8 0.6 8.8 0.6 9.3 1.2C9.9 1.7 9.9 2.5 9.3 3.1L3.3 9.1ZM6.4 2.2L8.3 4.1" fill="none" stroke="#e6ebee" stroke-width="0.9" stroke-linejoin="round"/></svg>
<svg style="left:47.00px;top:158.50px" width="10.00" height="10.00" viewBox="0 0 10 10"><circle cx="5" cy="5" r="4.3" fill="none" stroke="#e6ebee" stroke-width="0.9"/><path d="M5 2.6V5.2L6.6 6.4" fill="none" stroke="#e6ebee" stroke-width="0.9"/></svg>
<div class="abs" style="left:46.5px;top:314.5px;width:11px;height:11px;border-radius:50%;background:#fff"></div>
<svg style="left:50.40px;top:317.40px" width="4.00" height="5.40" viewBox="0 0 4 5.4"><path d="M0.8 0.6L3 2.7L0.8 4.8" fill="none" stroke="#1c2b33" stroke-width="1.1"/></svg>
<svg style="left:83.50px;top:69.50px" width="10.50" height="10.50" viewBox="0 0 10.5 10.5"><circle cx="4.2" cy="4.2" r="3.5" fill="none" stroke="#444e55" stroke-width="1"/><path d="M6.8 6.8L10 10" stroke="#444e55" stroke-width="1.1"/></svg>
<div class="t" style="left:98.20px;top:71.00px;font-size:10.00px;color:#8d949e;letter-spacing:-0.517px;">Search</div>
<svg style="left:76.00px;top:109.70px" width="10.00" height="8.80" viewBox="0 0 10 9"><path d="M0 1.2C0 0.6 0.4 0.2 1 0.2H3.6L4.8 1.4H9C9.6 1.4 10 1.8 10 2.4V7.8C10 8.4 9.6 8.8 9 8.8H1C0.4 8.8 0 8.4 0 7.8Z" fill="#0a78be"/></svg>
<div class="t" style="left:91.20px;top:112.00px;font-size:10.00px;color:#1c2b33;letter-spacing:-0.504px;">New Sales Campaign</div>
<svg style="left:86.00px;top:140.00px" width="11.00" height="11.00" viewBox="0 0 11 11"><rect x="0.7" y="0.7" width="3.8" height="3.8" rx="0.7" fill="none" stroke="#2c3a42" stroke-width="1.05"/><rect x="6.5" y="0.7" width="3.8" height="3.8" rx="0.7" fill="none" stroke="#2c3a42" stroke-width="1.05"/><rect x="0.7" y="6.5" width="3.8" height="3.8" rx="0.7" fill="none" stroke="#2c3a42" stroke-width="1.05"/><rect x="6.5" y="6.5" width="3.8" height="3.8" rx="0.7" fill="none" stroke="#2c3a42" stroke-width="1.05"/></svg>
<div class="t" style="left:102.64px;top:143.00px;font-size:10.00px;color:#1c2b33;letter-spacing:-0.526px;">New Sales Ad Set</div>
<svg style="left:97.50px;top:171.30px" width="9.60" height="9.60" viewBox="0 0 10 10"><rect x="0.6" y="0.6" width="8.8" height="8.8" rx="1" fill="none" stroke="#2c3a42" stroke-width="1"/><path d="M0.8 3.2H9.2" stroke="#2c3a42" stroke-width="0.9"/><path d="M2 2H3.6" stroke="#2c3a42" stroke-width="0.8"/></svg>
<div class="t" style="left:112.88px;top:174.00px;font-size:10.00px;color:#1c2b33;letter-spacing:-0.266px;">photos ad</div>
<svg style="left:97.50px;top:201.80px" width="9.60" height="9.60" viewBox="0 0 10 10"><rect x="0.6" y="0.6" width="8.8" height="8.8" rx="1" fill="none" stroke="#2c3a42" stroke-width="1"/><path d="M0.8 3.2H9.2" stroke="#2c3a42" stroke-width="0.9"/><path d="M2 2H3.6" stroke="#2c3a42" stroke-width="0.8"/></svg>
<div class="t" style="left:113.12px;top:204.00px;font-size:10.00px;color:#1c2b33;letter-spacing:-0.273px;">video ad</div>
<svg style="left:280.80px;top:113.35px" width="11.00" height="2.50" viewBox="0 0 11.00 2.50"><circle cx="1.25" cy="1.25" r="1.25" fill="#868d94"/><circle cx="5.50" cy="1.25" r="1.25" fill="#868d94"/><circle cx="9.75" cy="1.25" r="1.25" fill="#868d94"/></svg>
<svg style="left:280.80px;top:144.10px" width="11.00" height="2.50" viewBox="0 0 11.00 2.50"><circle cx="1.25" cy="1.25" r="1.25" fill="#868d94"/><circle cx="5.50" cy="1.25" r="1.25" fill="#868d94"/><circle cx="9.75" cy="1.25" r="1.25" fill="#868d94"/></svg>
<svg style="left:280.80px;top:174.10px" width="11.00" height="2.50" viewBox="0 0 11.00 2.50"><circle cx="1.25" cy="1.25" r="1.25" fill="#868d94"/><circle cx="5.50" cy="1.25" r="1.25" fill="#868d94"/><circle cx="9.75" cy="1.25" r="1.25" fill="#868d94"/></svg>
<svg style="left:280.80px;top:204.60px" width="11.00" height="2.50" viewBox="0 0 11.00 2.50"><circle cx="1.25" cy="1.25" r="1.25" fill="#868d94"/><circle cx="5.50" cy="1.25" r="1.25" fill="#868d94"/><circle cx="9.75" cy="1.25" r="1.25" fill="#868d94"/></svg>
<div class="abs btn" style="left:314.2px;top:60.5px;width:27.4px;height:24.2px;border-radius:4px"></div>
<svg style="left:322.50px;top:67.50px" width="10.50" height="10.00" viewBox="0 0 10.5 10"><rect x="0.6" y="0.6" width="9.3" height="8.8" rx="1.6" fill="none" stroke="#1c2b33" stroke-width="1.2"/><path d="M0.8 1.6C0.8 1 1.2 0.8 1.8 0.8H4V9.2H1.8C1.2 9.2 0.8 8.8 0.8 8.4Z" fill="#1c2b33"/></svg>
<div class="abs" style="left:349.5px;top:64px;width:117px;height:17.5px;border-radius:3px;background:#dce9f6"></div>
<svg style="left:352.40px;top:68.40px" width="10.00" height="8.80" viewBox="0 0 10 9"><path d="M0 1.2C0 0.6 0.4 0.2 1 0.2H3.6L4.8 1.4H9C9.6 1.4 10 1.8 10 2.4V7.8C10 8.4 9.6 8.8 9 8.8H1C0.4 8.8 0 8.4 0 7.8Z" fill="#0a78be"/></svg>
<div class="t" style="left:365.20px;top:68.00px;font-size:10.60px;color:#0a78be;letter-spacing:-0.145px;text-shadow:0.3px 0 0 #0a78be;">New Sales Campaign</div>
<svg style="left:474.00px;top:69.50px" width="4.40" height="7.00" viewBox="0 0 4.4 7"><path d="M0.7 0.6L3.6 3.5L0.7 6.4" fill="none" stroke="#7a858d" stroke-width="0.9"/></svg>
<svg style="left:487.50px;top:67.50px" width="11.50" height="11.20" viewBox="0 0 11 11"><rect x="0.7" y="0.7" width="3.8" height="3.8" rx="0.7" fill="none" stroke="#3f4b53" stroke-width="1.05"/><rect x="6.5" y="0.7" width="3.8" height="3.8" rx="0.7" fill="none" stroke="#3f4b53" stroke-width="1.05"/><rect x="0.7" y="6.5" width="3.8" height="3.8" rx="0.7" fill="none" stroke="#3f4b53" stroke-width="1.05"/><rect x="6.5" y="6.5" width="3.8" height="3.8" rx="0.7" fill="none" stroke="#3f4b53" stroke-width="1.05"/></svg>
<div class="t" style="left:501.14px;top:69.00px;font-size:10.30px;color:#5a6872;letter-spacing:0.063px;text-shadow:0.2px 0 0 #5a6872;">1 Ad set</div>
<svg style="left:549.00px;top:69.50px" width="4.40" height="7.00" viewBox="0 0 4.4 7"><path d="M0.7 0.6L3.6 3.5L0.7 6.4" fill="none" stroke="#7a858d" stroke-width="0.9"/></svg>
<svg style="left:562.40px;top:68.00px" width="10.00" height="10.00" viewBox="0 0 10 10"><rect x="0.6" y="0.6" width="8.8" height="8.8" rx="1" fill="none" stroke="#3f4b53" stroke-width="1"/><path d="M0.8 3.2H9.2" stroke="#3f4b53" stroke-width="0.9"/><path d="M2 2H3.6" stroke="#3f4b53" stroke-width="0.8"/></svg>
<div class="t" style="left:575.06px;top:69.00px;font-size:10.30px;color:#5a6872;letter-spacing:0.292px;text-shadow:0.2px 0 0 #5a6872;">2 Ads</div>
<div class="abs" style="left:870.8px;top:69.8px;width:5px;height:5px;border-radius:50%;background:#b4b8bd"></div>
<div class="t" style="left:882.00px;top:70.00px;font-size:10.00px;color:#4a5860;letter-spacing:-0.303px;">Completed</div>
<div class="abs" style="left:935px;top:66px;width:1px;height:14px;background:#dadde1"></div>
<div class="abs" style="left:943.5px;top:66.5px;width:25px;height:13.5px;border-radius:7px;background:#dbe8f5;box-shadow:inset 0 0 0 0.6px #c3d3e3"></div>
<div class="abs" style="left:954.8px;top:66.3px;width:14px;height:14px;border-radius:50%;background:#0a78be"></div>
<div class="abs btn" style="left:978.8px;top:60.5px;width:27.2px;height:24.2px;border-radius:4px"></div>
<svg style="left:988.00px;top:71.40px" width="8.10" height="2.10" viewBox="0 0 8.10 2.10"><circle cx="1.05" cy="1.05" r="1.05" fill="#1c2b33"/><circle cx="4.05" cy="1.05" r="1.05" fill="#1c2b33"/><circle cx="7.05" cy="1.05" r="1.05" fill="#1c2b33"/></svg>
<div class="abs" style="left:931.5px;top:93.5px;width:77px;height:23.3px;border-radius:4px;background:#f0f2f4"></div>
<div class="t" style="left:940.84px;top:102.00px;font-size:10.00px;color:#1c2b33;letter-spacing:0.021px;">Maximum</div>
<svg style="left:993.00px;top:103.50px" width="7.00" height="4.30" viewBox="0 0 7 4.3"><path d="M0 0H7L3.5 4.3Z" fill="#1c2b33"/></svg>
<div class="t" style="left:333.64px;top:157.00px;font-size:10.50px;color:#1c2b33;font-weight:bold;-webkit-text-stroke:0.22px;letter-spacing:0.144px;">Performance overview</div>
<div class="abs btn" style="left:725px;top:154px;width:47.7px;height:24.7px;border-color:#d8dde2"></div>
<div class="t" style="left:732.70px;top:164.00px;font-size:10.00px;color:#46525a;letter-spacing:-0.342px;">Day</div>
<svg style="left:755.80px;top:164.40px" width="7.30" height="4.60" viewBox="0 0 7 4.3"><path d="M0 0H7L3.5 4.3Z" fill="#1c2b33"/></svg>
<div class="abs btn" style="left:778px;top:154px;width:112px;height:24.7px"></div>
<div class="t" style="left:789.00px;top:163.00px;font-size:10.00px;color:#1c2b33;letter-spacing:0.161px;text-shadow:0.25px 0 0 #1c2b33;">Activity types: All</div>
<svg style="left:872.80px;top:164.40px" width="7.30" height="4.60" viewBox="0 0 7 4.3"><path d="M0 0H7L3.5 4.3Z" fill="#1c2b33"/></svg>
<div class="abs btn" style="left:895.3px;top:154px;width:81.5px;height:24.7px"></div>
<svg style="left:904.00px;top:162.50px" width="10.00" height="8.00" viewBox="0 0 10 8"><path d="M0 0.8H9.6M0 3.8H4.4M0 6.8H3.6" stroke="#1c2b33" stroke-width="0.9"/><circle cx="7.2" cy="5.4" r="2.5" fill="#1c2b33"/><circle cx="7.2" cy="5.4" r="0.8" fill="#fff"/></svg>
<div class="t" style="left:919.50px;top:163.00px;font-size:10.00px;color:#1c2b33;letter-spacing:-0.002px;text-shadow:0.25px 0 0 #1c2b33;">Customize</div>
<div class="abs mbox" style="left:333px;width:211.5px"></div>
<div class="abs mbox" style="left:550px;width:211px"></div>
<div class="abs mbox" style="left:766px;width:211px"></div>
<div class="t" style="left:339.50px;top:198.00px;font-size:9.00px;color:#1c2b33;font-weight:bold;-webkit-text-stroke:0.22px;letter-spacing:0.042px;">Messaging conversations started</div>
<svg style="left:485.50px;top:197.70px" width="7.80" height="7.80" viewBox="0 0 8 8"><circle cx="4" cy="4" r="3.9" fill="#1c2b33"/><rect x="3.4" y="3.4" width="1.2" height="2.8" fill="#fff"/><circle cx="4" cy="2.2" r="0.75" fill="#fff"/></svg>
<div class="t" style="left:555.50px;top:198.00px;font-size:9.00px;color:#1c2b33;font-weight:bold;-webkit-text-stroke:0.22px;letter-spacing:0.042px;">Per Messaging Conversation Started</div>
<svg style="left:717.00px;top:197.70px" width="7.80" height="7.80" viewBox="0 0 8 8"><circle cx="4" cy="4" r="3.9" fill="#1c2b33"/><rect x="3.4" y="3.4" width="1.2" height="2.8" fill="#fff"/><circle cx="4" cy="2.2" r="0.75" fill="#fff"/></svg>
<div class="t" style="left:771.86px;top:198.00px;font-size:9.00px;color:#1c2b33;font-weight:bold;-webkit-text-stroke:0.22px;letter-spacing:0.104px;">Amount spent</div>
<svg style="left:837.00px;top:197.70px" width="7.80" height="7.80" viewBox="0 0 8 8"><circle cx="4" cy="4" r="3.9" fill="#1c2b33"/><rect x="3.4" y="3.4" width="1.2" height="2.8" fill="#fff"/><circle cx="4" cy="2.2" r="0.75" fill="#fff"/></svg>
<div class="t" style="left:339.06px;top:212.00px;font-size:21.00px;color:#1c2b33;letter-spacing:1.781px;">572</div>
<div class="t" style="left:554.70px;top:212.00px;font-size:21.00px;color:#1c2b33;letter-spacing:0.742px;">3.83</div>
<div class="t" style="left:771.06px;top:212.00px;font-size:21.00px;color:#1c2b33;letter-spacing:1.051px;">2,190.00</div>
<div class="t" style="left:599.30px;top:217.00px;font-size:17.50px;color:#1c2b33;font-family:'DejaVu Sans',sans-serif;direction:rtl;letter-spacing:0.40px;">ج.م.</div>
<div class="t" style="left:860.80px;top:217.00px;font-size:17.50px;color:#1c2b33;font-family:'DejaVu Sans',sans-serif;direction:rtl;letter-spacing:0.40px;">ج.م.</div>
<div class="abs" style="left:339.5px;top:241.6px;width:8.8px;height:1px;background:#6b7780"></div>
<div class="abs" style="left:555.5px;top:241.6px;width:8.8px;height:1px;background:#6b7780"></div>
<div class="abs" style="left:771.7px;top:241.6px;width:8.8px;height:1px;background:#6b7780"></div>
<div class="t" style="left:333.64px;top:262.00px;font-size:10.50px;color:#1c2b33;font-weight:bold;-webkit-text-stroke:0.22px;letter-spacing:0.045px;">Messaging conversations started</div>
<div class="abs grid" style="top:287.3px"></div>
<div class="t" style="left:352.92px;top:285.00px;font-size:9.80px;color:#2c3a42;letter-spacing:0.619px;">60</div>
<div class="abs grid" style="top:321.3px"></div>
<div class="t" style="left:352.92px;top:319.00px;font-size:9.80px;color:#2c3a42;letter-spacing:0.619px;">40</div>
<div class="abs grid" style="top:355.3px"></div>
<div class="t" style="left:352.92px;top:353.00px;font-size:9.80px;color:#2c3a42;letter-spacing:0.619px;">20</div>
<div class="abs grid" style="top:389.5px"></div>
<div class="t" style="left:357.92px;top:387.00px;font-size:9.80px;color:#2c3a42;letter-spacing:1.870px;">0</div>
<div class="t" style="left:366.64px;top:396.00px;font-size:9.80px;color:#2c3a42;letter-spacing:-0.337px;">Apr 4, 2022</div>
<div class="t" style="left:504.14px;top:396.00px;font-size:9.80px;color:#2c3a42;letter-spacing:-0.534px;">Jan 10, 2023</div>
<div class="t" style="left:643.00px;top:396.00px;font-size:9.80px;color:#2c3a42;letter-spacing:-0.301px;">Oct 19, 2023</div>
<div class="t" style="left:784.00px;top:396.00px;font-size:9.80px;color:#2c3a42;letter-spacing:-0.282px;">Jul 27, 2024</div>
<div class="t" style="left:923.00px;top:396.00px;font-size:9.80px;color:#2c3a42;letter-spacing:-0.363px;">May 4, 2025</div>
<svg style="left:920px;top:284px" width="16" height="108" viewBox="920 284 16 108"><path d="M924.8 308L925 298L925.7 312L926.1 293L926.6 313L927.2 291L927.7 303L928.1 289.4L928.6 313.5L929.2 299L929.6 310L930 300" fill="none" stroke="#3ec8d3" stroke-width="0.95" stroke-linejoin="round"/><path d="M930 299.5V388.8" stroke="#38c5d0" stroke-width="1.6"/></svg>
<div class="t" style="left:334.44px;top:493.00px;font-size:10.40px;color:#1c2b33;font-weight:bold;-webkit-text-stroke:0.22px;letter-spacing:-0.225px;">Turn on automatic adjustments to optimize campaign performance across</div>
<div class="t" style="left:333.64px;top:506.00px;font-size:10.40px;color:#1c2b33;font-weight:bold;-webkit-text-stroke:0.22px;letter-spacing:-0.227px;">your account</div>
<div class="t" style="left:333.64px;top:525.00px;font-size:10.00px;color:#36444e;letter-spacing:-0.264px;">Automatically applying performance recommendations can help to optimize your</div>
<div class="t" style="left:335.24px;top:539.00px;font-size:10.00px;color:#36444e;letter-spacing:-0.356px;">campaign performance. You can choose which adjustments are automated and turn</div>
<svg style="left:740px;top:498px" width="240" height="52" viewBox="740 498 240 52"><rect x="804" y="524.8" width="75" height="26" fill="#fee9dc"/><rect x="804" y="536.2" width="75" height="15" fill="#fcdfcb"/><rect x="838.3" y="519" width="6.6" height="6" fill="#fcdcc6"/><rect x="838.3" y="524.6" width="6.6" height="3.8" fill="#f9ceb2"/><circle cx="811.3" cy="530" r="2.7" fill="#f8c84a"/><rect x="819.6" y="530.2" width="40.6" height="1.5" fill="#f9ceb2"/><rect x="896.3" y="503.8" width="75.6" height="12" fill="#fee8db"/><rect x="896.3" y="515.6" width="75.6" height="36" fill="#c3e6c5"/><rect x="931" y="500.6" width="6.5" height="3.4" fill="#fcd9c2"/><circle cx="903.8" cy="509.4" r="2.7" fill="#62bf90"/><rect x="915.6" y="508.7" width="41.3" height="1.5" fill="#f9cfae"/><path d="M911.5 552L921.3 543L929.5 549.6L934 550.5L965.4 522" fill="none" stroke="#0d8050" stroke-width="3.6" stroke-linejoin="miter"/><path d="M944 522.2L966.3 520.8L964.8 542.5" fill="none" stroke="#0d8050" stroke-width="3.4"/><path d="M746 551C744.6 545 747 540 751.6 538.4C751 534 756 531 760 532.4C764 531.4 767 534 766.4 537.6C771 537 776 540 777 545L779 551Z" fill="#0b0b0b"/><path d="M772.6 541.6C774 535.6 783 533 786.8 539.4L783 542Z" fill="#f59a23"/><path d="M771 551C770 545 774 540.6 779.4 541.4C782 541.8 783.4 544 783 546.4L784 548.6L782.6 551Z" fill="#3b1f14"/><path d="M782 551C781.4 545 784 539.6 790 539C798 538.6 805 541.6 812 544.6C818 546.6 824 547.6 826 551Z" fill="#15804a"/></svg>
<!-- taskbar -->
<div id="taskbar" class="abs"></div>
<div id="start" class="abs"></div>
<div id="tsearch" class="abs"></div>
<svg style="left:10.50px;top:557.50px" width="11.00" height="11.00" viewBox="0 0 11 11"><path d="M0 1.5L4.6 0.9V5.1H0ZM5.4 0.8L11 0V5.1H5.4ZM0 5.9H4.6V10.1L0 9.5ZM5.4 5.9H11V11L5.4 10.2Z" fill="#fff"/></svg>
<svg style="left:40.00px;top:557.00px" width="11.00" height="11.00" viewBox="0 0 11 11"><circle cx="6.6" cy="4.4" r="3.6" fill="none" stroke="#222" stroke-width="1"/><path d="M4 7L0.8 10.2" stroke="#222" stroke-width="1.2"/></svg>
<div class="t" style="left:58.50px;top:559.00px;font-size:9.60px;color:#3a3a3a;letter-spacing:0.147px;">Type here to search</div>
<svg style="left:176.00px;top:553.00px" width="40.00" height="21.00" viewBox="0 0 40 21"><path d="M16 2C17 7 18 8 23 9.5C18 11 17 12 16 17C15 12 14 11 9 9.5C14 8 15 7 16 2Z" fill="#f6b21b"/><path d="M31 9C31.6 11.6 32 12 34.6 12.6C32 13.2 31.6 13.6 31 16.2C30.4 13.6 30 13.2 27.4 12.6C30 12 30.4 11.6 31 9Z" fill="#f6c33b"/><path d="M3.6 12.4L4.4 14.6L6.6 15.2L4.4 16L3.6 18.2L2.8 16L0.6 15.2L2.8 14.6Z" fill="#2f9be8"/><circle cx="27" cy="3.4" r="1.1" fill="#f26b1d"/><circle cx="39" cy="16" r="1" fill="#6bb536"/></svg>
<svg style="left:234.50px;top:556.00px" width="12.00" height="11.00" viewBox="0 0 12 11"><rect x="2.2" y="2.2" width="6" height="6.6" fill="none" stroke="#e8eaec" stroke-width="1"/><path d="M0.4 1.2H3M0.4 9.8H3M7.6 1.2H9.2M7.6 9.8H9.2M11.2 0.4V4.4M11.2 6.4V10.6" stroke="#e8eaec" stroke-width="0.9"/></svg>
<svg style="left:262.00px;top:553.50px" width="16.00" height="16.00" viewBox="0 0 16 16"><defs><linearGradient id="cpa" x1="0" y1="0" x2="0.3" y2="1"><stop offset="0" stop-color="#2f86ee"/><stop offset="0.35" stop-color="#3fc6e8"/><stop offset="0.6" stop-color="#b9d53a"/><stop offset="0.85" stop-color="#f6921e"/><stop offset="1" stop-color="#e8412e"/></linearGradient><linearGradient id="cpb" x1="0.2" y1="0" x2="0.8" y2="1"><stop offset="0" stop-color="#4b8df8"/><stop offset="0.45" stop-color="#b453ea"/><stop offset="0.8" stop-color="#f2578f"/><stop offset="1" stop-color="#f7863e"/></linearGradient></defs><g transform="translate(8 8.4) scale(1.28 1.02) translate(-8 -8)"><path d="M6.6 1.6H10.4C12.6 1.6 14.2 3 13.6 5.4L12.2 11.2C11.6 13.4 10.4 14.4 8.4 14.4H7.4L9.8 4.6C10.2 3 9.6 1.6 6.6 1.6Z" fill="url(#cpb)"/><path d="M9.4 14.4H5.6C3.4 14.4 1.8 13 2.4 10.6L3.8 4.8C4.4 2.6 5.6 1.6 7.6 1.6H8.6L6.2 11.4C5.8 13 6.4 14.4 9.4 14.4Z" fill="url(#cpa)"/></g></svg>
<svg style="left:287.00px;top:553.50px" width="16.00" height="16.00" viewBox="0 0 16 16"><circle cx="8" cy="8" r="7.6" fill="#1b7fd6"/><path d="M0.6 9C1 3 7 -0.6 12.4 2.2C15 3.8 15.6 6.4 15.2 8C14 5.4 10 4.4 7.4 6C4.6 7.8 4.4 12 7.6 14.8C4 15.4 0.6 12.6 0.6 9Z" fill="#35c1f1"/><path d="M7.6 14.8C4.4 12 4.6 7.8 7.4 6C6.6 8 7.4 10.6 10.4 11.2C12.6 11.6 14.4 10.6 15 9.6C14.6 13 11.4 15.6 7.6 14.8Z" fill="#1159a8"/><path d="M5.2 5.2C7.6 3.2 12.6 3.6 15.2 8C13.4 6.2 9.6 5.4 7.4 6.4Z" fill="#6fdc74"/></svg>
<svg style="left:312.00px;top:554.50px" width="17.00" height="14.00" viewBox="0 0 17 14"><path d="M0.6 1.4C0.6 0.8 1 0.6 1.6 0.6H6L7.4 2H15.4C16 2 16.4 2.4 16.4 3V12.6C16.4 13.2 16 13.6 15.4 13.6H1.6C1 13.6 0.6 13.2 0.6 12.6Z" fill="#f7b928"/><rect x="0.6" y="4" width="15.8" height="9.6" rx="0.8" fill="#fbd667"/><rect x="4.4" y="8" width="8.2" height="5.6" fill="#2f7fd6"/><rect x="6" y="10.4" width="5" height="3.2" fill="#fbd667"/></svg>
<svg style="left:337.00px;top:554.00px" width="16.00" height="16.00" viewBox="0 0 16 16"><path d="M5 4V2.4C5 0.8 11 0.8 11 2.4V4" fill="none" stroke="#2aa4ea" stroke-width="1.2"/><rect x="1" y="3.6" width="14" height="12" rx="1.8" fill="#f4f5f6"/><rect x="4.6" y="6.4" width="3" height="3" fill="#f25022"/><rect x="8.4" y="6.4" width="3" height="3" fill="#7fba00"/><rect x="4.6" y="10.2" width="3" height="3" fill="#00a4ef"/><rect x="8.4" y="10.2" width="3" height="3" fill="#ffb900"/></svg>
<svg style="left:361.50px;top:554.50px" width="17.00" height="15.00" viewBox="0 0 17 15"><path d="M5 2.4L11.6 0.4L16.6 3.4V12L11.6 14.6L5 12.6Z" fill="#1a8fe3"/><path d="M5 7.6L16.6 5V12L11.6 14.6L5 12.6Z" fill="#5fc3f5"/><path d="M9 2L16.6 3.4V6.2L9 8Z" fill="#0f64b8"/><rect x="0.4" y="3.6" width="8.6" height="8.6" rx="1" fill="#0f64b8"/><circle cx="4.7" cy="7.9" r="2.3" fill="none" stroke="#fff" stroke-width="1.2"/></svg>
<div class="abs" style="left:409.5px;top:549.3px;width:24.5px;height:26.7px;background:#585858"></div>
<svg style="left:387.5px;top:554.3px" width="16" height="16" viewBox="-8 -8 16 16"><circle r="7.4" fill="#fbbc05"/><path d="M0 0L-6.4 -3.7A7.4 7.4 0 0 1 6.4 -3.7Z" fill="#ea4335"/><path d="M0 0L-6.4 -3.7A7.4 7.4 0 0 0 0 7.4L3.2 1.8Z" fill="#34a853"/><path d="M0 0L6.4 -3.7H-1Z" fill="#ea4335"/><circle r="3.4" fill="#fff"/><circle r="2.6" fill="#4285f4"/><circle cx="3.4" cy="4.2" r="4.8" fill="#6b4a3a"/></svg>
<svg style="left:413.5px;top:554.3px" width="16" height="16" viewBox="-8 -8 16 16"><circle r="7.4" fill="#fbbc05"/><path d="M0 0L-6.4 -3.7A7.4 7.4 0 0 1 6.4 -3.7Z" fill="#ea4335"/><path d="M0 0L-6.4 -3.7A7.4 7.4 0 0 0 0 7.4L3.2 1.8Z" fill="#34a853"/><path d="M0 0L6.4 -3.7H-1Z" fill="#ea4335"/><circle r="3.4" fill="#fff"/><circle r="2.6" fill="#4285f4"/><circle cx="3.4" cy="4.2" r="4.8" fill="#2f6b1e"/></svg>
<svg style="left:438.0px;top:554.3px" width="16" height="16" viewBox="-8 -8 16 16"><circle r="7.4" fill="#fbbc05"/><path d="M0 0L-6.4 -3.7A7.4 7.4 0 0 1 6.4 -3.7Z" fill="#ea4335"/><path d="M0 0L-6.4 -3.7A7.4 7.4 0 0 0 0 7.4L3.2 1.8Z" fill="#34a853"/><path d="M0 0L6.4 -3.7H-1Z" fill="#ea4335"/><circle r="3.4" fill="#fff"/><circle r="2.6" fill="#4285f4"/><circle cx="3.4" cy="4.2" r="4.8" fill="#9b7a6e"/></svg>
<svg style="left:463.0px;top:554.3px" width="16" height="16" viewBox="-8 -8 16 16"><circle r="7.4" fill="#fbbc05"/><path d="M0 0L-6.4 -3.7A7.4 7.4 0 0 1 6.4 -3.7Z" fill="#ea4335"/><path d="M0 0L-6.4 -3.7A7.4 7.4 0 0 0 0 7.4L3.2 1.8Z" fill="#34a853"/><path d="M0 0L6.4 -3.7H-1Z" fill="#ea4335"/><circle r="3.4" fill="#fff"/><circle r="2.6" fill="#4285f4"/><circle cx="3.4" cy="4.2" r="4.8" fill="#7a4bc2"/></svg>
<svg style="left:489.0px;top:554.3px" width="16" height="16" viewBox="-8 -8 16 16"><circle r="7.4" fill="#fbbc05"/><path d="M0 0L-6.4 -3.7A7.4 7.4 0 0 1 6.4 -3.7Z" fill="#ea4335"/><path d="M0 0L-6.4 -3.7A7.4 7.4 0 0 0 0 7.4L3.2 1.8Z" fill="#34a853"/><path d="M0 0L6.4 -3.7H-1Z" fill="#ea4335"/><circle r="3.4" fill="#fff"/><circle r="2.6" fill="#4285f4"/><circle cx="3.4" cy="4.2" r="4.8" fill="#2b3540"/></svg>
<svg style="left:513.0px;top:554.3px" width="16" height="16" viewBox="-8 -8 16 16"><circle r="7.4" fill="#fbbc05"/><path d="M0 0L-6.4 -3.7A7.4 7.4 0 0 1 6.4 -3.7Z" fill="#ea4335"/><path d="M0 0L-6.4 -3.7A7.4 7.4 0 0 0 0 7.4L3.2 1.8Z" fill="#34a853"/><path d="M0 0L6.4 -3.7H-1Z" fill="#ea4335"/><circle r="3.4" fill="#fff"/><circle r="2.6" fill="#4285f4"/><circle cx="3.4" cy="4.2" r="4.8" fill="#1a1a1a"/></svg>
<div class="t" style="left:423.00px;top:564.00px;font-size:7.00px;color:#dfe8dc;font-weight:bold;-webkit-text-stroke:0.22px;">T</div>
<svg style="left:537.50px;top:553.50px" width="16.00" height="16.00" viewBox="0 0 16 16"><circle cx="8" cy="8" r="7.4" fill="#1c1c1f" stroke="#d6d8da" stroke-width="1"/><path d="M8 8L6 2.6M8 8L13.4 7M8 8L4.8 13" stroke="#d6d8da" stroke-width="1.2"/><circle cx="8" cy="8" r="4" fill="none" stroke="#d6d8da" stroke-width="0.9"/></svg>
<div class="abs" style="left:562.5px;top:554.5px;width:15px;height:14.5px;border-radius:2.5px;background:#0a1d33"></div>
<div class="t" style="left:565.36px;top:559.00px;font-size:8.20px;color:#38a8ff;font-weight:bold;-webkit-text-stroke:0.22px;letter-spacing:-0.030px;">Ps</div>
<svg style="left:586.5px;top:554.3px" width="16" height="16" viewBox="-8 -8 16 16"><circle r="7.4" fill="#fbbc05"/><path d="M0 0L-6.4 -3.7A7.4 7.4 0 0 1 6.4 -3.7Z" fill="#ea4335"/><path d="M0 0L-6.4 -3.7A7.4 7.4 0 0 0 0 7.4L3.2 1.8Z" fill="#34a853"/><path d="M0 0L6.4 -3.7H-1Z" fill="#ea4335"/><circle r="3.4" fill="#fff"/><circle r="2.6" fill="#4285f4"/><circle cx="4.8" cy="5.6" r="3.4" fill="#2a62c9"/></svg>
<svg style="left:611.0px;top:554.3px" width="16" height="16" viewBox="-8 -8 16 16"><circle r="7.4" fill="#fbbc05"/><path d="M0 0L-6.4 -3.7A7.4 7.4 0 0 1 6.4 -3.7Z" fill="#ea4335"/><path d="M0 0L-6.4 -3.7A7.4 7.4 0 0 0 0 7.4L3.2 1.8Z" fill="#34a853"/><path d="M0 0L6.4 -3.7H-1Z" fill="#ea4335"/><circle r="3.4" fill="#fff"/><circle r="2.6" fill="#4285f4"/><circle cx="4.8" cy="5.6" r="3.4" fill="#2f6fb8"/></svg>
<svg style="left:635.5px;top:554.3px" width="16" height="16" viewBox="-8 -8 16 16"><circle r="7.4" fill="#fbbc05"/><path d="M0 0L-6.4 -3.7A7.4 7.4 0 0 1 6.4 -3.7Z" fill="#ea4335"/><path d="M0 0L-6.4 -3.7A7.4 7.4 0 0 0 0 7.4L3.2 1.8Z" fill="#34a853"/><path d="M0 0L6.4 -3.7H-1Z" fill="#ea4335"/><circle r="3.4" fill="#fff"/><circle r="2.6" fill="#4285f4"/><circle cx="4.8" cy="5.6" r="3.4" fill="#3e7d2a"/></svg>
<div class="abs" style="left:660px;top:553.5px;width:16px;height:16px;border-radius:50%;background:#fffc00"></div>
<svg style="left:663.50px;top:556.50px" width="9.00" height="10.00" viewBox="0 0 9 10"><path d="M4.5 0.6C6.6 0.6 7 2.4 6.9 4.2L7.8 4.6L7 5.4C7.4 6.6 8.2 7 8.6 7.2C8 7.8 7.2 7.6 6.8 8.2C6 8.2 5.4 9.2 4.5 9.2C3.6 9.2 3 8.2 2.2 8.2C1.8 7.6 1 7.8 0.4 7.2C0.8 7 1.6 6.6 2 5.4L1.2 4.6L2.1 4.2C2 2.4 2.4 0.6 4.5 0.6Z" fill="#fff" stroke="#333" stroke-width="0.5"/></svg>
<svg style="left:684.00px;top:554.00px" width="16.00" height="15.00" viewBox="0 0 16 15"><path d="M1 1H7V6L4 8H1Z" fill="#2f9e7a"/><path d="M9 1H15V5L12 8L9 6Z" fill="#35b58c"/><path d="M1 9H6L8 12V14H1Z" fill="#27866a"/><circle cx="12" cy="11" r="3.2" fill="#2b73d9"/></svg>
<div class="abs" style="left:310.5px;top:574px;width:14.5px;height:2px;background:#8ec2f0"></div>
<div class="abs" style="left:326.0px;top:574px;width:3.5px;height:2px;background:#8ec2f0"></div>
<div class="abs" style="left:386.0px;top:574px;width:19.0px;height:2px;background:#8ec2f0"></div>
<div class="abs" style="left:409.5px;top:574px;width:22.0px;height:2px;background:#8ec2f0"></div>
<div class="abs" style="left:436.0px;top:574px;width:19.0px;height:2px;background:#8ec2f0"></div>
<div class="abs" style="left:460.5px;top:574px;width:19.5px;height:2px;background:#8ec2f0"></div>
<div class="abs" style="left:486.0px;top:574px;width:19.0px;height:2px;background:#8ec2f0"></div>
<div class="abs" style="left:511.0px;top:574px;width:19.0px;height:2px;background:#8ec2f0"></div>
<div class="abs" style="left:707px;top:549.5px;width:11.5px;height:26.5px;background:#f3f3f3"></div>
<svg style="left:709.60px;top:553.00px" width="6.00" height="3.60" viewBox="0 0 6 3.6"><path d="M0.5 3.2L3 0.7L5.5 3.2" fill="none" stroke="#333" stroke-width="0.9"/></svg>
<svg style="left:709.60px;top:569.00px" width="6.00" height="3.60" viewBox="0 0 6 3.6"><path d="M0.5 0.4L3 2.9L5.5 0.4" fill="none" stroke="#333" stroke-width="0.9"/></svg>
<div class="abs" style="left:718.5px;top:549.3px;width:305.5px;height:26.7px;background:#2a2928;border-left:1.5px solid #1a1b1b"></div>
<svg style="left:732.50px;top:554.00px" width="18.00" height="16.00" viewBox="0 0 18 16"><circle cx="7" cy="6" r="4" fill="#f6a623"/><path d="M3.4 13.6C0.6 13.6 0.4 9.8 3.2 9.4C3.8 6.4 8.2 6 9.4 8.8C12 6.8 15.4 9.4 14 11.8C16.4 12 16 13.6 14.6 13.6Z" fill="#cfe3f7"/><circle cx="13" cy="3.6" r="3.2" fill="#d9342b"/><rect x="12.6" y="1.8" width="0.9" height="3.6" fill="#fff"/></svg>
<div class="t" style="left:753.92px;top:560.00px;font-size:10.00px;color:#f2f2f2;letter-spacing:-0.182px;">20°C</div>
<svg style="left:793.50px;top:559.00px" width="9.00" height="5.40" viewBox="0 0 9 5.4"><path d="M0.6 4.8L4.5 0.8L8.4 4.8" fill="none" stroke="#eee" stroke-width="1"/></svg>
<svg style="left:812.00px;top:557.50px" width="14.00" height="10.00" viewBox="0 0 14 10"><path d="M3 8.4C0.6 8.4 0.4 5.2 2.8 4.8C3.2 2.2 7 1.8 8 4.2C10.4 3.2 12.6 5.6 11 8.4Z" fill="#c9ccd0"/><circle cx="10.6" cy="7" r="2.8" fill="#2f7fd6"/><path d="M10.6 5.6V8.4M9.2 7H12" stroke="#fff" stroke-width="0.7"/></svg>
<svg style="left:836.50px;top:555.50px" width="10.00" height="13.00" viewBox="0 0 10 13"><rect x="1" y="1.4" width="6" height="10.2" rx="1.4" fill="none" stroke="#ddd" stroke-width="0.9"/><rect x="2.6" y="3.6" width="2.8" height="4" fill="#ddd"/><path d="M7.4 4.4H9.2V8H7.4" fill="none" stroke="#ddd" stroke-width="0.8"/><path d="M2.6 0.6H5.4M2.6 12.4H5.4" stroke="#ddd" stroke-width="0.8"/></svg>
<svg style="left:857.00px;top:558.50px" width="11.00" height="6.60" viewBox="0 0 11 6.6"><rect x="1.6" y="0.6" width="9" height="5.4" rx="0.6" fill="#e6e6e6"/><rect x="0" y="2" width="1.6" height="2.6" fill="#e6e6e6"/><path d="M2.4 0.2L0.6 1.6" stroke="#e6e6e6" stroke-width="0.8"/></svg>
<svg style="left:878.00px;top:556.50px" width="10.00" height="10.00" viewBox="0 0 10 10"><path d="M1 9.4A8.4 8.4 0 0 1 9.4 1M2.8 9.4A6.6 6.6 0 0 1 9.4 2.8M4.8 9.4A4.6 4.6 0 0 1 9.4 4.8" fill="none" stroke="#d0d0d0" stroke-width="0.8"/><path d="M6.6 9.4A2.8 2.8 0 0 1 9.4 6.6V9.4Z" fill="#e6e6e6"/></svg>
<svg style="left:898.50px;top:556.50px" width="12.00" height="10.00" viewBox="0 0 12 10"><path d="M0.6 3.4H2.6L5.2 1V9L2.6 6.6H0.6Z" fill="none" stroke="#eee" stroke-width="0.9" stroke-linejoin="round"/><path d="M6.8 3.4C7.6 4.4 7.6 5.6 6.8 6.6M8.4 2.2C9.8 3.8 9.8 6.2 8.4 7.8M10 1C12 3.4 12 6.6 10 9" fill="none" stroke="#eee" stroke-width="0.8"/></svg>
<div class="t" style="left:919.92px;top:559.00px;font-size:8.40px;color:#fff;letter-spacing:-0.582px;">ENG</div>
<div class="t" style="left:948.28px;top:553.00px;font-size:8.80px;color:#fff;letter-spacing:-0.735px;">10:12 PM</div>
<div class="t" style="left:944.00px;top:565.00px;font-size:8.80px;color:#fff;letter-spacing:-0.345px;">04/05/2025</div>
<svg style="left:996.00px;top:556.80px" width="14.00" height="13.00" viewBox="0 0 14 13"><path d="M0.6 0.6H10.6V8.4H4.2L2 10.4V8.4H0.6Z" fill="#f0f0f0"/><path d="M2.4 2.6H8.8M2.4 4.4H8.8M2.4 6.2H7" stroke="#272928" stroke-width="0.7"/><circle cx="10.6" cy="10.6" r="4.4" fill="#2a2928" stroke="#d8d8d8" stroke-width="0.8"/></svg>
<div class="t" style="left:1004.50px;top:564.00px;font-size:7.80px;color:#fff;font-weight:bold;-webkit-text-stroke:0.22px;">5</div>
</body>
</html>
